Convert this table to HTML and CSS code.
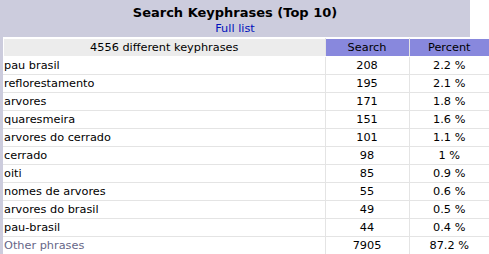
FILE: index.html
```html
<!DOCTYPE html>
<html>
<head>
<meta charset="utf-8">
<link rel="stylesheet" href="styles.css">
</head>
<body>
<div class="panel">
  <div class="head-row">
    <div class="title">
      <div class="title-text">Search Keyphrases (Top 10)</div>
      <a class="full-link" href="#">Full list</a>
    </div>
    <div class="blank"></div>
  </div>
  <div class="data-wrap">
    <table class="data">
      <colgroup><col><col class="c-search"><col class="c-pct"></colgroup>
      <tr class="hdr">
        <th class="h-key">4556 different keyphrases</th>
        <th class="h-num">Search</th>
        <th class="h-num">Percent</th>
      </tr>
      <tr><td class="key">pau brasil</td><td>208</td><td>2.2 %</td></tr>
      <tr><td class="key">reflorestamento</td><td>195</td><td>2.1 %</td></tr>
      <tr><td class="key">arvores</td><td>171</td><td>1.8 %</td></tr>
      <tr><td class="key">quaresmeira</td><td>151</td><td>1.6 %</td></tr>
      <tr><td class="key">arvores do cerrado</td><td>101</td><td>1.1 %</td></tr>
      <tr><td class="key">cerrado</td><td>98</td><td>1 %</td></tr>
      <tr><td class="key">oiti</td><td>85</td><td>0.9 %</td></tr>
      <tr><td class="key">nomes de arvores</td><td>55</td><td>0.6 %</td></tr>
      <tr><td class="key">arvores do brasil</td><td>49</td><td>0.5 %</td></tr>
      <tr><td class="key">pau-brasil</td><td>44</td><td>0.4 %</td></tr>
      <tr><td class="key other">Other phrases</td><td>7905</td><td>87.2 %</td></tr>
    </table>
  </div>
</div>
</body>
</html>
```

FILE: styles.css
```css
html, body {
  margin: 0;
  padding: 0;
  background: #ffffff;
}
body {
  font-family: "DejaVu Sans", Verdana, sans-serif;
  font-size: 11.3px;
  color: #000000;
}
.panel {
  width: 489px;
}
.head-row {
  display: flex;
  height: 37px;
}
.title {
  width: 470px;
  background: #CCCCDD;
  text-align: center;
  padding-top: 5px;
  box-sizing: border-box;
}
.title-text {
  font-size: 13px;
  font-weight: bold;
  line-height: 16px;
}
.full-link {
  display: block;
  color: #0011BB;
  text-decoration: none;
  line-height: 15px;
}
.blank {
  flex: 1;
  background: #ffffff;
}
.data-wrap {
  border-left: 3px solid #CCCCDD;
  padding-top: 1px;
}
.data {
  width: 486px;
  border-collapse: collapse;
  table-layout: fixed;
  border-top: 1px solid #ffffff;
}
.c-search { width: 84px; }
.c-pct { width: 80px; }
.data th, .data td {
  height: 17px;
  padding: 0;
  line-height: 17px;
  font-weight: normal;
  text-align: center;
  border-bottom: 1px solid #E4E4E4;
  border-left: 1px solid #E4E4E4;
  white-space: nowrap;
  overflow: hidden;
}
.data th.h-key {
  background: #ECECEC;
  border-left: 1px solid #ffffff;
  border-bottom: 1px solid #ffffff;
}
.data th.h-num {
  background: #8888DD;
  border-left: 1px solid #E4E4E4;
  border-bottom: 1px solid #ffffff;
}
.data td.key {
  text-align: left;
  padding-left: 0;
  border-left: 1px solid #ffffff;
}
.data td.other {
  color: #666688;
}
```
